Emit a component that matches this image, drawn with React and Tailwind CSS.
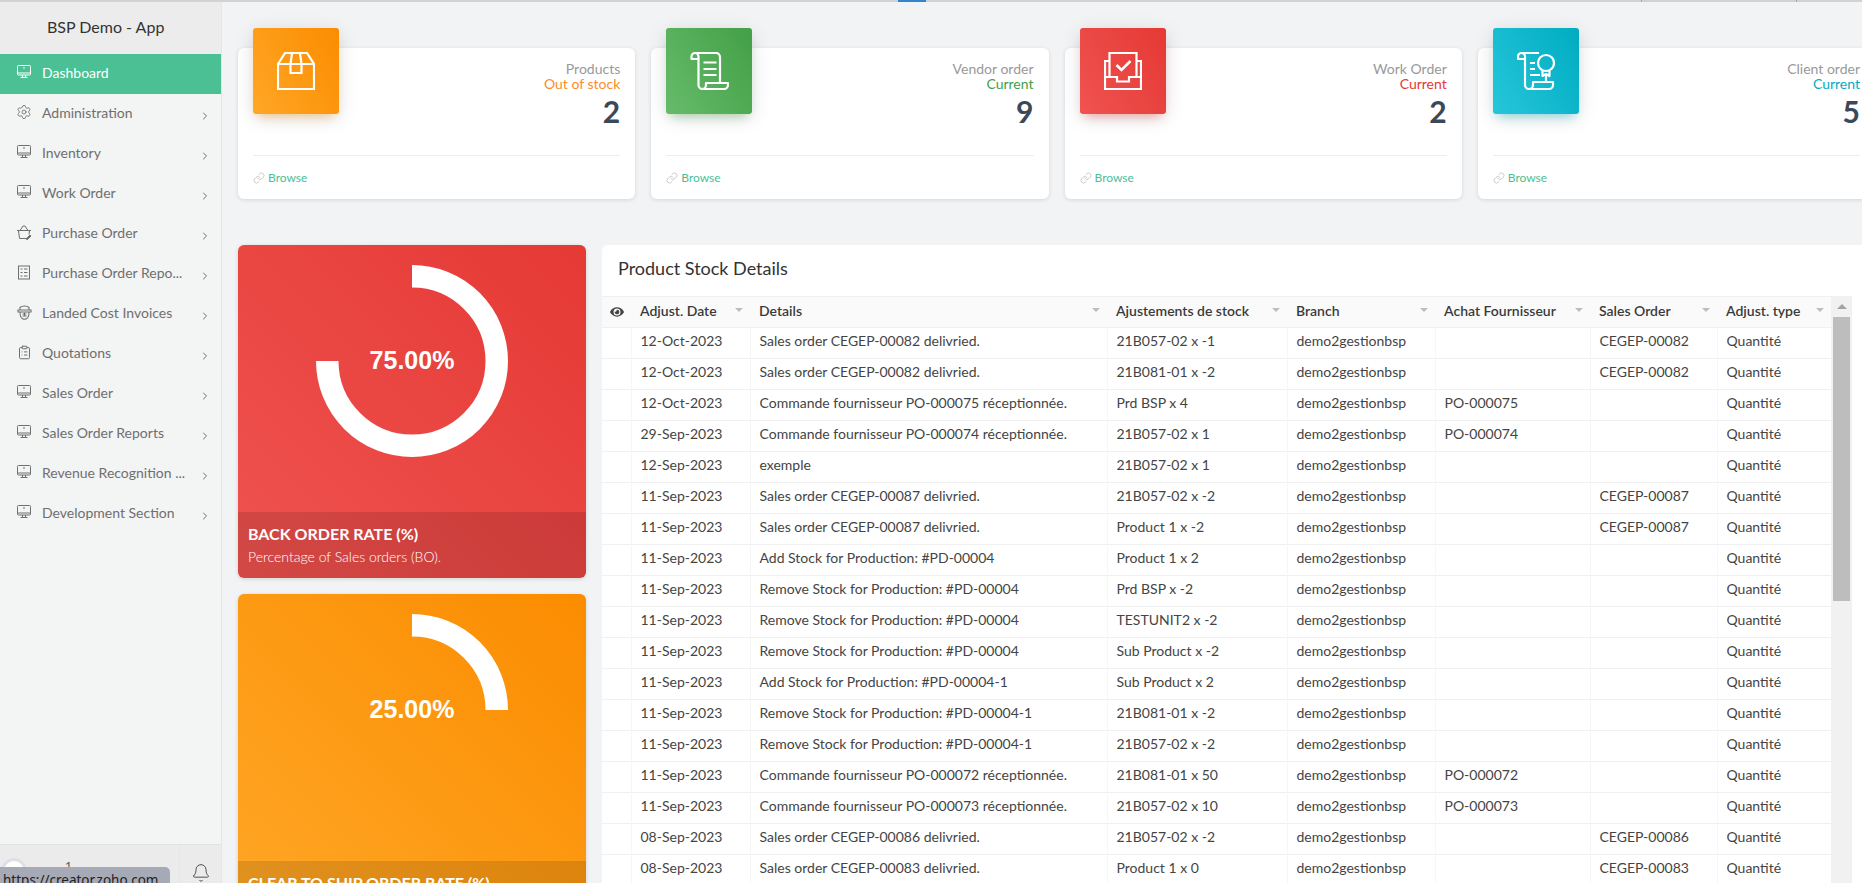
import { Bell, ChevronRight, ClipboardList, Link, Settings } from "lucide-react";
import { FaEye } from "react-icons/fa";

const MonitorIcon = () => (
  <svg width="16" height="14" viewBox="0 0 16 14" fill="none" stroke="currentColor" strokeWidth="1">
    <rect x="1.5" y="0.5" width="13" height="9.5" rx="1" />
    <path d="M1.5 8h13M7 3h2M6.5 10v2M9.5 10v2M4.5 12.5h7" />
  </svg>
);

const BasketIcon = () => (
  <svg width="16" height="15" viewBox="0 0 16 15" fill="none" stroke="currentColor" strokeWidth="1">
    <path d="M1 5.5h14M2.5 5.5l1 8h7M13.5 5.5l-.5 4M4 5.5l3-4.5h2l3 4.5" />
    <path d="M10.5 13.5l3.5-3.5 1 1-3.5 3.5h-1z" fill="currentColor" />
  </svg>
);

const ReportIcon = () => (
  <svg width="14" height="15" viewBox="0 0 14 15" fill="none" stroke="currentColor" strokeWidth="1">
    <rect x="1.5" y="1" width="11" height="13" />
    <path d="M3.5 4h2M7 4h3.5M3.5 7.5h2M7 7.5h3.5M3.5 11h2M7 11h3.5" />
  </svg>
);

const BadgeIcon = () => (
  <svg width="15" height="15" viewBox="0 0 15 15" fill="none" stroke="currentColor" strokeWidth="1.1">
    <path d="M3 2.5C5 .5 10 .5 12 2.5V5H3zM1 5h13v2H1zM3 7.5c0 9 9 9 9 0" />
    <path d="M5.5 9h4M7.5 7.5v4M5.5 11h4" />
  </svg>
);

const menu = [
  { label: "Dashboard", icon: <MonitorIcon />, active: true },
  { label: "Administration", icon: <Settings size={16} strokeWidth={1.3} /> },
  { label: "Inventory", icon: <MonitorIcon /> },
  { label: "Work Order", icon: <MonitorIcon /> },
  { label: "Purchase Order", icon: <BasketIcon /> },
  { label: "Purchase Order Repo...", icon: <ReportIcon /> },
  { label: "Landed Cost Invoices", icon: <BadgeIcon /> },
  { label: "Quotations", icon: <ClipboardList size={15} strokeWidth={1.6} /> },
  { label: "Sales Order", icon: <MonitorIcon /> },
  { label: "Sales Order Reports", icon: <MonitorIcon /> },
  { label: "Revenue Recognition ...", icon: <MonitorIcon /> },
  { label: "Development Section", icon: <MonitorIcon /> },
];

const BoxIcon = () => (
  <svg width="38" height="38" viewBox="0 0 38 38" fill="none" stroke="#fff" strokeWidth="2.2">
    <path d="M1 12L8 1h22l7 11v25H1zM1 12h36" />
    <path d="M15 1l-1.5 11v9h11v-9L23 1" />
  </svg>
);

const ScrollIcon = () => (
  <svg width="39" height="38" viewBox="0 0 39 38" fill="none" stroke="#fff" strokeWidth="2.2" strokeLinejoin="round">
    <path d="M8 7H1.5V4.5A3.5 3.5 0 0 1 5 1h21a4 4 0 0 1 4 4v26" />
    <path d="M5 1a3.5 3.5 0 0 1 3.5 3.5V33a4 4 0 0 0 4 4H34a4 4 0 0 0 4-4v-2H16v2a4 4 0 0 1-4 4" />
    <path d="M13.5 10.500h13M13.500 17h13M13.500 23h13" />
  </svg>
);

const InboxCheckIcon = () => (
  <svg width="38" height="38" viewBox="0 0 38 38" fill="none" stroke="#fff" strokeWidth="2.2">
    <path d="M5.500 24V1h27v23" />
    <path d="M5.500 9H1v28h36V9h-4.500" />
    <path d="M1 25h12v4.500h12V25h12" />
    <path d="M12.500 13l5 5 9-9" strokeWidth="2.600" />
  </svg>
);

const CertIcon = () => (
  <svg width="38" height="38" viewBox="0 0 38 38" fill="none" stroke="#fff" strokeWidth="2.2" strokeLinejoin="round">
    <path d="M7 7H1V4.500A3.500 3.500 0 0 1 4.500 1H22" />
    <path d="M4.500 1A3.500 3.500 0 0 1 8 4.500V33a4 4 0 0 0 4 4h20a4 4 0 0 0 4-4v-3H16v3a4 4 0 0 1-4 4" />
    <circle cx="29" cy="11" r="8" />
    <path d="M25.500 18.500V24l3.500-2 3.500 2v-5.500M29 23v7M13 11h5M13 17h5M13 23h10" />
  </svg>
);

const stats = [
  {
    label: "Products",
    sub: "Out of stock",
    value: "2",
    subColor: "text-[#fb8c2c]",
    icon: <BoxIcon />,
    box: "bg-[linear-gradient(60deg,#ffa726,#fb8c00)] shadow-[0_4px_20px_0_rgba(0,0,0,.12),0_7px_10px_-5px_rgba(255,152,0,.4)]",
  },
  {
    label: "Vendor order",
    sub: "Current",
    value: "9",
    subColor: "text-[#43a047]",
    icon: <ScrollIcon />,
    box: "bg-[linear-gradient(60deg,#66bb6a,#43a047)] shadow-[0_4px_20px_0_rgba(0,0,0,.12),0_7px_10px_-5px_rgba(76,175,80,.4)]",
  },
  {
    label: "Work Order",
    sub: "Current",
    value: "2",
    subColor: "text-[#e53935]",
    icon: <InboxCheckIcon />,
    box: "bg-[linear-gradient(60deg,#ef5350,#e53935)] shadow-[0_4px_20px_0_rgba(0,0,0,.12),0_7px_10px_-5px_rgba(244,67,54,.4)]",
  },
  {
    label: "Client order",
    sub: "Current",
    value: "5",
    subColor: "text-[#00acc1]",
    icon: <CertIcon />,
    box: "bg-[linear-gradient(60deg,#26c6da,#00acc1)] shadow-[0_4px_20px_0_rgba(0,0,0,.12),0_7px_10px_-5px_rgba(0,188,212,.4)]",
  },
];

const rows = [
  ["12-Oct-2023", "Sales order CEGEP-00082 delivried.", "21B057-02 x -1", "", "CEGEP-00082"],
  ["12-Oct-2023", "Sales order CEGEP-00082 delivried.", "21B081-01 x -2", "", "CEGEP-00082"],
  ["12-Oct-2023", "Commande fournisseur PO-000075 réceptionnée.", "Prd BSP x 4", "PO-000075", ""],
  ["29-Sep-2023", "Commande fournisseur PO-000074 réceptionnée.", "21B057-02 x 1", "PO-000074", ""],
  ["12-Sep-2023", "exemple", "21B057-02 x 1", "", ""],
  ["11-Sep-2023", "Sales order CEGEP-00087 delivried.", "21B057-02 x -2", "", "CEGEP-00087"],
  ["11-Sep-2023", "Sales order CEGEP-00087 delivried.", "Product 1 x -2", "", "CEGEP-00087"],
  ["11-Sep-2023", "Add Stock for Production: #PD-00004", "Product 1 x 2", "", ""],
  ["11-Sep-2023", "Remove Stock for Production: #PD-00004", "Prd BSP x -2", "", ""],
  ["11-Sep-2023", "Remove Stock for Production: #PD-00004", "TESTUNIT2 x -2", "", ""],
  ["11-Sep-2023", "Remove Stock for Production: #PD-00004", "Sub Product x -2", "", ""],
  ["11-Sep-2023", "Add Stock for Production: #PD-00004-1", "Sub Product x 2", "", ""],
  ["11-Sep-2023", "Remove Stock for Production: #PD-00004-1", "21B081-01 x -2", "", ""],
  ["11-Sep-2023", "Remove Stock for Production: #PD-00004-1", "21B057-02 x -2", "", ""],
  ["11-Sep-2023", "Commande fournisseur PO-000072 réceptionnée.", "21B081-01 x 50", "PO-000072", ""],
  ["11-Sep-2023", "Commande fournisseur PO-000073 réceptionnée.", "21B057-02 x 10", "PO-000073", ""],
  ["08-Sep-2023", "Sales order CEGEP-00086 delivried.", "21B057-02 x -2", "", "CEGEP-00086"],
  ["08-Sep-2023", "Sales order CEGEP-00083 delivried.", "Product 1 x 0", "", "CEGEP-00083"],
];

const columns = ["Adjust. Date", "Details", "Ajustements de stock", "Branch", "Achat Fournisseur", "Sales Order", "Adjust. type"];

const Rate = ({ gradient, percent, arc, title, text }) => (
  <div className={`w-[348px] h-[333px] shrink-0 rounded-md overflow-hidden flex flex-col ${gradient} shadow-[0_1px_4px_0_rgba(0,0,0,.14)]`}>
    <div className="h-[267px] pt-[20px] flex justify-center">
      <div className="relative w-[192px] h-[192px]">
        <svg width="192" height="192" viewBox="0 0 192 192" fill="none" stroke="#fff" strokeWidth="22.5">
          <path d={arc} />
        </svg>
        <div className="absolute inset-0 flex items-center justify-center font-['Liberation_Sans',sans-serif] font-bold text-[25px] text-white">
          {percent}
        </div>
      </div>
    </div>
    <div className="h-[66px] bg-black/[.12] pl-[10px] pr-[11px] pt-[12px] text-white">
      <div className="text-[16px] leading-[20px] font-bold">{title}</div>
      {text && <div className="text-[14px] leading-[20px] mt-[3px] font-light">{text}</div>}
    </div>
  </div>
);

export default function App() {
  return (
    <div className="w-full h-[883px] overflow-hidden flex flex-col bg-[#f2f3f5] font-['Lato',sans-serif] relative">
      <div className="h-[2px] shrink-0 bg-[#d2d2d2] flex">
        <div className="ml-[898px] w-[28px] bg-[#3385d0]" />
        <div className="ml-[715px] w-px bg-[#a8a8a8]" />
        <div className="ml-[154px] w-px bg-[#a8a8a8]" />
      </div>

      <div className="flex flex-1 min-h-0">
        <aside className="w-[222px] shrink-0 flex flex-col bg-[#f3f4f4] border-r border-[#e6e6e6]">
          <div className="h-[52px] shrink-0 flex items-center pl-[47px] pb-[3px] text-[16px] text-[#333] bg-[#ececec]">BSP Demo - App</div>
          <nav className="flex-1">
            {menu.map((item) => (
              <div
                key={item.label}
                className={`h-[40px] flex items-center pl-[16px] pb-[4px] text-[14px] ${item.active ? "bg-[#4bc095] text-white" : "text-[#6f6f6f]"}`}
              >
                <span className="w-[16px] flex justify-center shrink-0">{item.icon}</span>
                <span className="ml-[10px] whitespace-nowrap">{item.label}</span>
                {!item.active && <ChevronRight size={12} strokeWidth={2} className="ml-auto mr-[10px] mt-[7px] shrink-0" />}
              </div>
            ))}
          </nav>
          <div className="h-[39px] shrink-0 flex items-stretch bg-[#ebebeb] border-t border-[#e2e2e2]">
            <div className="w-[180px] border-r border-[#e6e6e6] flex items-start pt-[13px] pl-[1px] text-[12px] text-[#555]">
              <div className="w-[26px] h-[26px] rounded-full bg-white border-[3px] border-[#dde0e6]" />
              <span className="ml-[38px] -mt-[1px]">1</span>
            </div>
            <div className="flex-1 flex justify-center pt-[18px]">
              <Bell size={20} strokeWidth={1.1} className="text-[#444]" />
            </div>
          </div>
        </aside>

        <main className="flex-1 min-w-0 overflow-hidden pl-[16px] pt-[46px]">
          <div className="w-[1637px] grid grid-cols-4 gap-[16px]">
            {stats.map((s) => (
              <div key={s.label} className="h-[151px] bg-white rounded-md px-[15px] shadow-[0_1px_4px_0_rgba(0,0,0,.12)]">
                <div className="h-[108px] flex justify-between border-b border-[#eeeeee]">
                  <div className={`w-[86px] h-[86px] -mt-[20px] rounded-[3px] flex items-center justify-center ${s.box}`}>{s.icon}</div>
                  <div className="pt-[13px] text-right text-[14px] leading-[15px]">
                    <div className="text-[#999]">{s.label}</div>
                    <div className={s.subColor}>{s.sub}</div>
                    <div className="text-[30px] leading-[38px] mt-[1px] font-bold text-[#3c4858]">{s.value}</div>
                  </div>
                </div>
                <div className="flex items-center h-[43px] text-[12px] text-[#4bc095]">
                  <Link size={12} strokeWidth={1.2} className="text-[#aaa]" />
                  <span className="ml-[3px]">Browse</span>
                </div>
              </div>
            ))}
          </div>

          <div className="w-[1637px] flex gap-[16px] mt-[46px]">
            <div className="flex flex-col gap-[16px] shrink-0">
              <Rate
                gradient="bg-[linear-gradient(45deg,#ef5350,#e53935)]"
                percent="75.00%"
                arc="M96 11.250A84.750 84.750 0 1 1 11.250 96"
                title="BACK ORDER RATE (%)"
                text="Percentage of Sales orders (BO)."
              />
              <Rate
                gradient="bg-[linear-gradient(45deg,#ffa726,#fb8c00)]"
                percent="25.00%"
                arc="M96 11.250A84.750 84.750 0 0 1 180.750 96"
                title="CLEAR TO SHIP ORDER RATE (%)"
              />
            </div>

            <div className="flex-1 h-[700px] bg-white rounded-tl-md">
              <div className="h-[51px] flex items-center pl-[16px] pb-[4px] text-[18px] text-[#333]">Product Stock Details</div>
              <div className="flex">
                <table className="w-[1229px] table-fixed border-collapse text-[14px] text-[#444]">
                  <colgroup>
                    <col className="w-[29px]" />
                    <col className="w-[119px]" />
                    <col className="w-[357px]" />
                    <col className="w-[180px]" />
                    <col className="w-[148px]" />
                    <col className="w-[155px]" />
                    <col className="w-[127px]" />
                    <col className="w-[114px]" />
                  </colgroup>
                  <thead>
                    <tr className="h-[31px] bg-[#fafafa] border-y border-[#f0f0f0]">
                      <th>
                        <FaEye size={14} className="mx-auto text-[#444]" />
                      </th>
                      {columns.map((c) => (
                        <th key={c} className="px-[9px] pb-[4px] font-semibold text-left text-[#3a3a3a]">
                          <div className="flex items-center justify-between whitespace-nowrap">
                            <span>{c}</span>
                            <span className="w-0 h-0 border-x-[4px] border-x-transparent border-t-[4px] border-t-[#bdbdbd] mr-[-2px]" />
                          </div>
                        </th>
                      ))}
                    </tr>
                  </thead>
                  <tbody>
                    {rows.map((r, i) => (
                      <tr key={i} className="h-[31px] border-b border-[#f0f0f0]">
                        <td className="border-r border-[#f6f6f6]" />
                        <td className="px-[9px] pb-[5px] border-r border-[#f6f6f6]">{r[0]}</td>
                        <td className="px-[9px] pb-[5px] border-r border-[#f6f6f6] whitespace-nowrap">{r[1]}</td>
                        <td className="px-[9px] pb-[5px] border-r border-[#f6f6f6]">{r[2]}</td>
                        <td className="px-[9px] pb-[5px] border-r border-[#f6f6f6]">demo2gestionbsp</td>
                        <td className="px-[9px] pb-[5px] border-r border-[#f6f6f6]">{r[3]}</td>
                        <td className="px-[9px] pb-[5px] border-r border-[#f6f6f6]">{r[4]}</td>
                        <td className="px-[9px] pb-[5px]">Quantité</td>
                      </tr>
                    ))}
                  </tbody>
                </table>
                <div className="w-[21px] h-[587px] shrink-0 bg-[#f1f1f1] px-[2px] flex flex-col items-center pt-[8px]">
                  <span className="w-0 h-0 border-x-[5px] border-x-transparent border-b-[5px] border-b-[#a3a3a3]" />
                  <div className="w-full h-[284px] mt-[8px] bg-[#bdbdbd]" />
                </div>
              </div>
            </div>
          </div>
        </main>
      </div>

      <div className="absolute left-0 bottom-0 w-[170px] h-[16px] bg-[#a6a9b6] rounded-tr-[5px] pl-[3px] font-['Noto_Sans',sans-serif] text-[13.500px] leading-[26px] text-[#222] overflow-hidden">
        https://creator.zoho.com
      </div>
    </div>
  );
}
